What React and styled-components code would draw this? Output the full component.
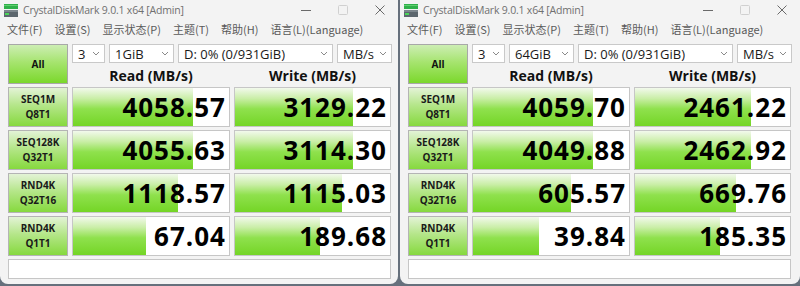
import React from "react";
import styled, { createGlobalStyle } from "styled-components";

const GlobalStyle = createGlobalStyle`
  body {
    margin: 0;
    background: #66707c;
    font-family: "Open Sans", "Noto Sans CJK SC", sans-serif;
  }
`;

const Desktop = styled.div`
  display: flex;
  gap: 2px;
  width: 800px;
  height: 286px;
  overflow: hidden;
`;

const Window = styled.div`
  width: ${(p) => p.$width}px;
  flex: none;
  height: 284px;
  background: #f3f3f3;
  border-radius: 0 0 8px 8px;
  display: flex;
  flex-direction: column;
`;

const TitleBar = styled.div`
  height: 20px;
  display: flex;
  align-items: center;
  padding-left: 4px;
`;

const Title = styled.span`
  margin-left: 5px;
  font-size: 10.5px;
  letter-spacing: -0.2px;
  color: #707070;
  flex: 1;
`;

const CaptionButton = styled.div`
  width: 37px;
  height: 20px;
  display: flex;
  align-items: center;
  justify-content: center;
  color: ${(p) => (p.$disabled ? "#d0d0d0" : "#6a6a6a")};
`;

const MenuBar = styled.div`
  height: 18px;
  display: flex;
  align-items: center;
  gap: 12px;
  padding-left: 7px;
  font-family: "Noto Sans CJK SC", sans-serif;
  font-size: 11px;
  color: #5a5a5a;
`;

const Board = styled.div`
  display: grid;
  grid-template-columns: 60px 158px 157px;
  grid-template-rows: 19px 18px repeat(4, 40px) 20px;
  column-gap: 4px;
  row-gap: 3px;
  padding: 6px 0 0 8px;
`;

const AllButton = styled.div`
  grid-row: 1 / span 2;
  border: 1px solid #a8a8a8;
  background: linear-gradient(#cdeeb4, #a6e46f 45%, #7bd82c);
  display: flex;
  align-items: center;
  justify-content: center;
  font-size: 10px;
  font-weight: 700;
  color: #111;
`;

const Controls = styled.div`
  grid-column: 2 / span 2;
  display: flex;
  gap: 4px;
`;

const Combo = styled.div`
  width: ${(p) => p.$width}px;
  flex: none;
  box-sizing: border-box;
  height: 19px;
  background: #fff;
  border: 1px solid #c9c9c9;
  display: flex;
  align-items: center;
  padding: 0 4px 0 5px;
  font-size: 13px;
  color: #1a1a1a;
`;

const ComboText = styled.span`
  flex: 1;
  white-space: nowrap;
`;

const Header = styled.div`
  display: flex;
  align-items: flex-end;
  justify-content: center;
  font-size: 14px;
  font-weight: 700;
  line-height: 16px;
  color: #111;
`;

const Label = styled.div`
  border: 1px solid #b4b4b4;
  background: linear-gradient(#e3f3d6, #b5e68a 45%, #86d93e);
  display: flex;
  flex-direction: column;
  align-items: center;
  justify-content: center;
  font-size: 10px;
  font-weight: 700;
  line-height: 15px;
  color: #1a1a1a;
`;

const Cell = styled.div`
  position: relative;
  border: 1px solid #c6c6c6;
  background: #fff;
  display: flex;
  align-items: center;
  justify-content: flex-end;
  padding-right: 3px;
  overflow: hidden;
`;

const Bar = styled.div`
  position: absolute;
  left: 0;
  top: 0;
  bottom: 0;
  background: linear-gradient(#f2f9ec, #c9eea6 28%, #8fe14d 55%, #74d526);
`;

const Score = styled.span`
  position: relative;
  font-size: 26px;
  font-weight: 700;
  letter-spacing: 1px;
  color: #000;
`;

const Comment = styled.div`
  grid-column: 1 / span 3;
  border: 1px solid #c6c6c6;
  background: #fff;
`;

function AppIcon() {
  return (
    <svg width="14" height="13" viewBox="0 0 14 13">
      <rect x="0" y="0" width="14" height="5" fill="#30b04a" />
      <rect x="0" y="1" width="14" height="1" fill="#5fd06f" />
      <rect x="0" y="6" width="14" height="7" fill="#5d676e" />
      <rect x="0" y="6" width="14" height="2" fill="#7d878d" />
      <rect x="1" y="9" width="4" height="2" fill="#4cd45a" />
    </svg>
  );
}

function Chevron() {
  return (
    <svg width="8" height="5" viewBox="0 0 8 5">
      <path d="M1 1 L4 4 L7 1" fill="none" stroke="#8a8a8a" strokeWidth="1" />
    </svg>
  );
}

const windows = [
  {
    width: 398,
    size: "1GiB",
    rows: [
      ["SEQ1M", "Q8T1", "4058.57", 0.77, "3129.22", 0.76],
      ["SEQ128K", "Q32T1", "4055.63", 0.77, "3114.30", 0.76],
      ["RND4K", "Q32T16", "1118.57", 0.67, "1115.03", 0.69],
      ["RND4K", "Q1T1", "67.04", 0.47, "189.68", 0.55],
    ],
  },
  {
    width: 400,
    size: "64GiB",
    rows: [
      ["SEQ1M", "Q8T1", "4059.70", 0.77, "2461.22", 0.75],
      ["SEQ128K", "Q32T1", "4049.88", 0.77, "2462.92", 0.75],
      ["RND4K", "Q32T16", "605.57", 0.63, "669.76", 0.65],
      ["RND4K", "Q1T1", "39.84", 0.42, "185.35", 0.55],
    ],
  },
];

const menus = ["文件(F)", "设置(S)", "显示状态(P)", "主题(T)", "帮助(H)", "语言(L)(Language)"];

function Result({ value, fill }) {
  return (
    <Cell>
      <Bar style={{ width: `${fill * 100}%` }} />
      <Score>{value}</Score>
    </Cell>
  );
}

function DiskMark({ data }) {
  return (
    <Window $width={data.width}>
      <TitleBar>
        <AppIcon />
        <Title>CrystalDiskMark 9.0.1 x64 [Admin]</Title>
        <CaptionButton>
          <svg width="10" height="10" viewBox="0 0 10 10">
            <path d="M0 5.5 H10" stroke="currentColor" strokeWidth="1" />
          </svg>
        </CaptionButton>
        <CaptionButton $disabled>
          <svg width="10" height="10" viewBox="0 0 10 10">
            <rect x="0.5" y="0.5" width="9" height="9" rx="1" fill="none" stroke="currentColor" />
          </svg>
        </CaptionButton>
        <CaptionButton>
          <svg width="10" height="10" viewBox="0 0 10 10">
            <path d="M0.5 0.5 L9.5 9.5 M9.5 0.5 L0.5 9.5" stroke="currentColor" strokeWidth="1" />
          </svg>
        </CaptionButton>
      </TitleBar>
      <MenuBar>
        {menus.map((m) => (
          <span key={m}>{m}</span>
        ))}
      </MenuBar>
      <Board>
        <AllButton>All</AllButton>
        <Controls>
          <Combo $width={33}>
            <ComboText>3</ComboText>
            <Chevron />
          </Combo>
          <Combo $width={65}>
            <ComboText>{data.size}</ComboText>
            <Chevron />
          </Combo>
          <Combo $width={155}>
            <ComboText>D: 0% (0/931GiB)</ComboText>
            <Chevron />
          </Combo>
          <Combo $width={55}>
            <ComboText>MB/s</ComboText>
            <Chevron />
          </Combo>
        </Controls>
        <Header>Read (MB/s)</Header>
        <Header>Write (MB/s)</Header>
        {data.rows.map(([a, b, read, rf, write, wf], i) => (
          <React.Fragment key={i}>
            <Label>
              <span>{a}</span>
              <span>{b}</span>
            </Label>
            <Result value={read} fill={rf} />
            <Result value={write} fill={wf} />
          </React.Fragment>
        ))}
        <Comment />
      </Board>
    </Window>
  );
}

export default function App() {
  return (
    <>
      <GlobalStyle />
      <Desktop>
        {windows.map((w, i) => (
          <DiskMark key={i} data={w} />
        ))}
      </Desktop>
    </>
  );
}
